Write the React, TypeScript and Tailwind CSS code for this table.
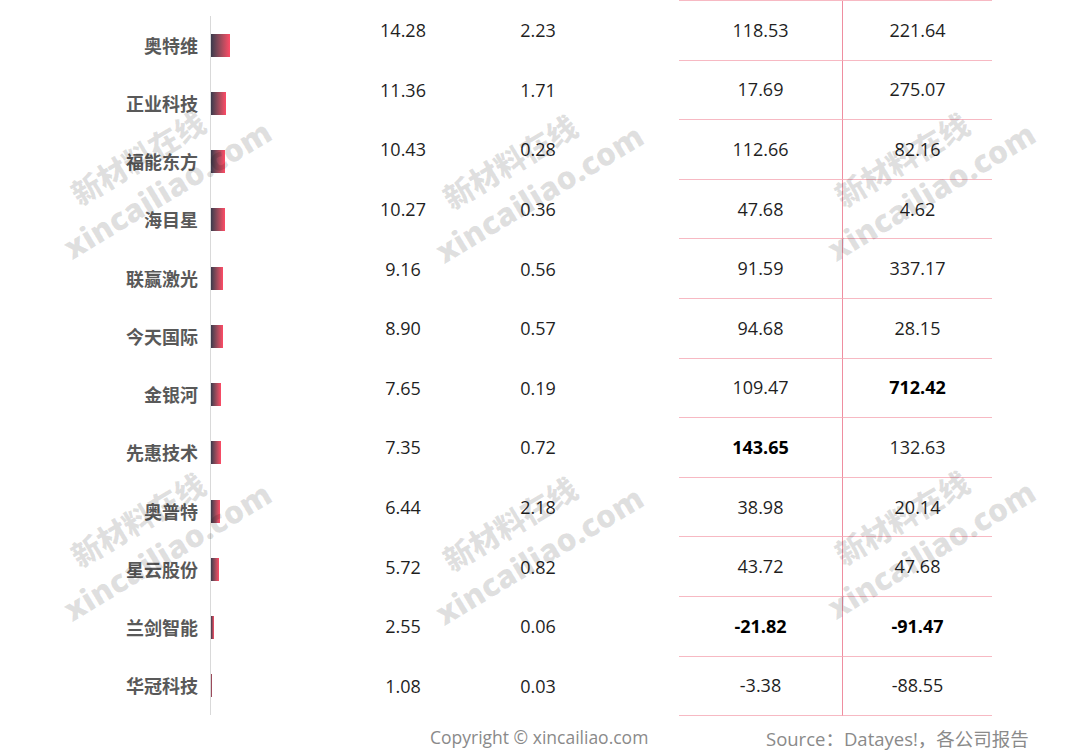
const rows = [
  { name: "奥特维", a: "14.28", b: "2.23", c: "118.53", d: "221.64" },
  { name: "正业科技", a: "11.36", b: "1.71", c: "17.69", d: "275.07" },
  { name: "福能东方", a: "10.43", b: "0.28", c: "112.66", d: "82.16" },
  { name: "海目星", a: "10.27", b: "0.36", c: "47.68", d: "4.62" },
  { name: "联赢激光", a: "9.16", b: "0.56", c: "91.59", d: "337.17" },
  { name: "今天国际", a: "8.90", b: "0.57", c: "94.68", d: "28.15" },
  { name: "金银河", a: "7.65", b: "0.19", c: "109.47", d: "712.42", boldD: true },
  { name: "先惠技术", a: "7.35", b: "0.72", c: "143.65", d: "132.63", boldC: true },
  { name: "奥普特", a: "6.44", b: "2.18", c: "38.98", d: "20.14" },
  { name: "星云股份", a: "5.72", b: "0.82", c: "43.72", d: "47.68" },
  { name: "兰剑智能", a: "2.55", b: "0.06", c: "-21.82", d: "-91.47", boldC: true, boldD: true },
  { name: "华冠科技", a: "1.08", b: "0.03", c: "-3.38", d: "-88.55" },
];

// px per unit of the first column
const scale = 1.33;

const marks = [
  { left: 33, top: 195 },
  { left: 405, top: 199 },
  { left: 797, top: 197 },
  { left: 33, top: 557 },
  { left: 405, top: 561 },
  { left: 797, top: 555 },
];

function Watermark({ left, top }: { left: number; top: number }) {
  return (
    <div
      className="absolute origin-top-left -rotate-[31deg] font-extrabold text-black/[0.12] whitespace-nowrap"
      style={{ left, top }}
    >
      <div className="ml-[34px] h-[42px] text-[30px] leading-[42px] font-['Noto_Sans_CJK_SC',sans-serif]">
        新材料在线
      </div>
      <div className="h-[44px] text-[31.5px] leading-[44px] font-['Open_Sans',sans-serif]">
        xincailiao.com
      </div>
    </div>
  );
}

export default function App() {
  return (
    <div className="relative h-[751px] w-[1080px] overflow-hidden bg-white font-['Open_Sans','Noto_Sans_CJK_SC',sans-serif]">
      <div className="flex h-[723px]">
        {/* bar chart */}
        <div className="flex w-[336px] pt-[16px]">
          <div className="w-[210px] pr-[12px]">
            {rows.map((r) => (
              <div
                key={r.name}
                className="flex h-[58.25px] items-center justify-end text-[18px] font-bold text-[#595959] font-['Noto_Sans_CJK_SC',sans-serif]"
              >
                {r.name}
              </div>
            ))}
          </div>
          <div className="h-[699px] border-l border-[#d9d9d9]">
            {rows.map((r) => (
              <div key={r.name} className="flex h-[58.25px] items-center">
                <div
                  className="h-[23px] bg-gradient-to-r from-[#3a3a4c] to-[#ff4a66]"
                  style={{ width: Math.max(1.2, parseFloat(r.a) * scale) }}
                />
              </div>
            ))}
          </div>
        </div>

        {/* plain columns */}
        <div className="w-[134px] pt-[1px]">
          {rows.map((r) => (
            <div key={r.name} className="flex h-[59.6px] items-center justify-center text-[18px] text-[#1f1f1f]">
              {r.a}
            </div>
          ))}
        </div>
        <div className="w-[136px] pt-[1px]">
          {rows.map((r) => (
            <div key={r.name} className="flex h-[59.6px] items-center justify-center text-[18px] text-[#1f1f1f]">
              {r.b}
            </div>
          ))}
        </div>
        <div className="w-[73px]" />

        {/* table */}
        <div className="h-[716px] w-[313px] border-t border-[#f7b9c3]">
          <div className="grid grid-cols-[164px_149px]">
            {rows.map((r) => (
              <div key={r.name} className="contents">
                <div
                  className={`flex h-[59.6px] items-center justify-center border-b border-r border-b-[#f7b9c3] border-r-[#ef8ea0] text-[18px] text-[#1f1f1f] ${
                    r.boldC ? "font-bold text-black" : ""
                  }`}
                >
                  {r.c}
                </div>
                <div
                  className={`flex h-[59.6px] items-center justify-center border-b border-[#f7b9c3] text-[18px] text-[#1f1f1f] ${
                    r.boldD ? "font-bold text-black" : ""
                  }`}
                >
                  {r.d}
                </div>
              </div>
            ))}
          </div>
        </div>
      </div>

      {/* footer */}
      <div className="flex h-[28px] items-center pl-[430px] text-[#8a8a8a]">
        <div className="w-[336px] text-[17.5px]">Copyright © xincailiao.com</div>
        <div className="mt-[4px] text-[18.5px]">Source：Datayes!，各公司报告</div>
      </div>

      {marks.map((m, i) => (
        <Watermark key={i} left={m.left} top={m.top} />
      ))}
    </div>
  );
}
